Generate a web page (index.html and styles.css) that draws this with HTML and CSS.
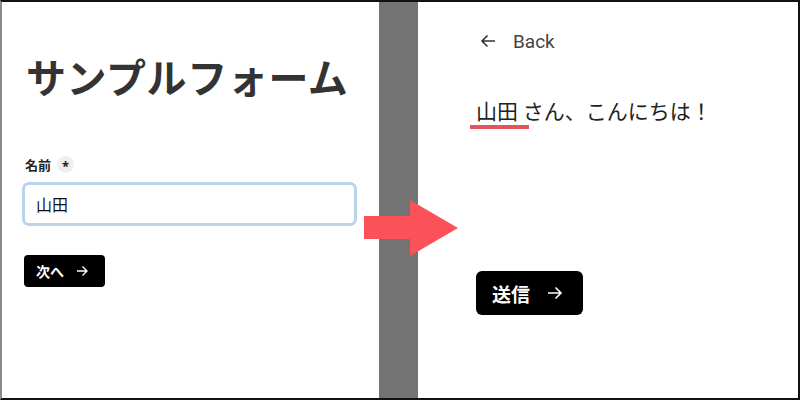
FILE: index.html
```html
<!DOCTYPE html>
<html lang="ja">
<head>
    <meta charset="UTF-8">
    <meta name="viewport" content="width=device-width, initial-scale=1.0">
    <title>サンプルフォーム</title>
    <link rel="stylesheet" href="styles.css">
</head>
<body>
    <div class="frame">
        <div class="panel form-panel">
            <h1 class="title">サンプルフォーム</h1>

            <label class="field-label" for="name">
                名前 <span class="required">*</span>
            </label>
            <input class="text-input" id="name" type="text" value="山田">

            <button class="btn btn-small">
                次へ
                <svg width="12" height="12" viewBox="0 0 12 12"><path d="M1 6h10M6.5 1.5 11 6l-4.5 4.5" fill="none" stroke="#fff" stroke-width="1.3"/></svg>
            </button>
        </div>

        <div class="divider"></div>

        <div class="panel result-panel">
            <a class="back-link" href="#">
                <svg width="16" height="16" viewBox="0 0 16 16"><path d="M15 8H2M7.5 2.5 2 8l5.5 5.5" fill="none" stroke="#333" stroke-width="1.6"/></svg>
                Back
            </a>

            <p class="greeting"><span class="name">山田 </span>さん、こんにちは！</p>

            <button class="btn btn-large">
                送信
                <svg width="16" height="16" viewBox="0 0 16 16"><path d="M1 8h13M8.5 2.5 14 8l-5.5 5.5" fill="none" stroke="#fff" stroke-width="1.6"/></svg>
            </button>
        </div>

        <!-- arrow between the two screens -->
        <svg class="flow-arrow" width="96" height="58" viewBox="0 0 96 58">
            <polygon points="0,16 46,16 46,0 94,28 46,56 46,39 0,39" fill="#fb5259"/>
        </svg>
    </div>
</body>
</html>
```

FILE: styles.css
```css
body, html {
    margin: 0;
    padding: 0;
    height: 100%;
    overflow: hidden;
}

body {
    font-family: "Noto Sans", "Noto Sans CJK JP", sans-serif;
}

.frame {
    position: relative;
    display: flex;
    box-sizing: border-box;
    width: 800px;
    height: 400px;
    border: 2px solid #111;
    border-left-color: #8a8a8a;
    background: #fff;
}

.panel {
    display: flex;
    flex-direction: column;
    align-items: flex-start;
}

.form-panel {
    width: 377px;
    box-sizing: border-box;
    padding: 0 22px 0 20px;
}

.divider {
    width: 39px;
    background-color: #737373;
}

.result-panel {
    flex: 1;
    padding-left: 58px;
}

.title {
    margin: 50px 0 0 4px;
    font-size: 40px;
    line-height: 48px;
    font-weight: 700;
    letter-spacing: 0.6px;
    color: #333;
    font-family: "Noto Sans CJK JP", sans-serif;
}

.field-label {
    display: flex;
    align-items: center;
    gap: 6px;
    margin: 55px 0 0 3px;
    height: 18px;
    font-size: 13px;
    font-weight: 700;
    color: #222;
}

.required {
    display: flex;
    justify-content: center;
    align-items: center;
    width: 17px;
    height: 17px;
    border-radius: 50%;
    background-color: #eee;
    font-size: 13px;
    line-height: 1;
    padding-top: 4px;
    box-sizing: border-box;
}

.text-input {
    box-sizing: border-box;
    width: 100%;
    height: 44px;
    margin-top: 9px;
    padding: 0 11px;
    border: 3px solid #b9d3ea;
    border-radius: 7px;
    font-family: "Noto Sans CJK JP", sans-serif;
    font-size: 16px;
    color: #111;
    outline: none;
}

.btn {
    display: flex;
    align-items: center;
    border: none;
    background: #000;
    color: white;
    font-family: "Noto Sans CJK JP", sans-serif;
    font-weight: 700;
    cursor: pointer;
}

.btn-small {
    margin: 29px 0 0 2px;
    width: 81px;
    height: 32px;
    padding: 0 0 0 12px;
    gap: 12px;
    border-radius: 4px;
    font-size: 14px;
}

.btn-large {
    margin-top: 146px;
    width: 107px;
    height: 44px;
    padding: 0 0 0 16px;
    gap: 17px;
    border-radius: 6px;
    font-size: 19px;
}

.back-link {
    display: flex;
    align-items: center;
    gap: 17px;
    margin: 27px 0 0 4px;
    height: 24px;
    font-family: Roboto, "Noto Sans", sans-serif;
    font-size: 19px;
    color: #444;
    text-decoration: none;
}

.greeting {
    margin: 42px 0 0 0;
    font-size: 21px;
    line-height: 30px;
    color: #222;
    font-family: "Noto Sans CJK JP", sans-serif;
}

.name {
    position: relative;
    white-space: pre;
}

.name::after {
    content: "";
    position: absolute;
    left: -6px;
    right: -6px;
    bottom: -4px;
    height: 4px;
    background-color: #e2545e;
}

.flow-arrow {
    position: absolute;
    left: 362px;
    top: 198px;
}
```
